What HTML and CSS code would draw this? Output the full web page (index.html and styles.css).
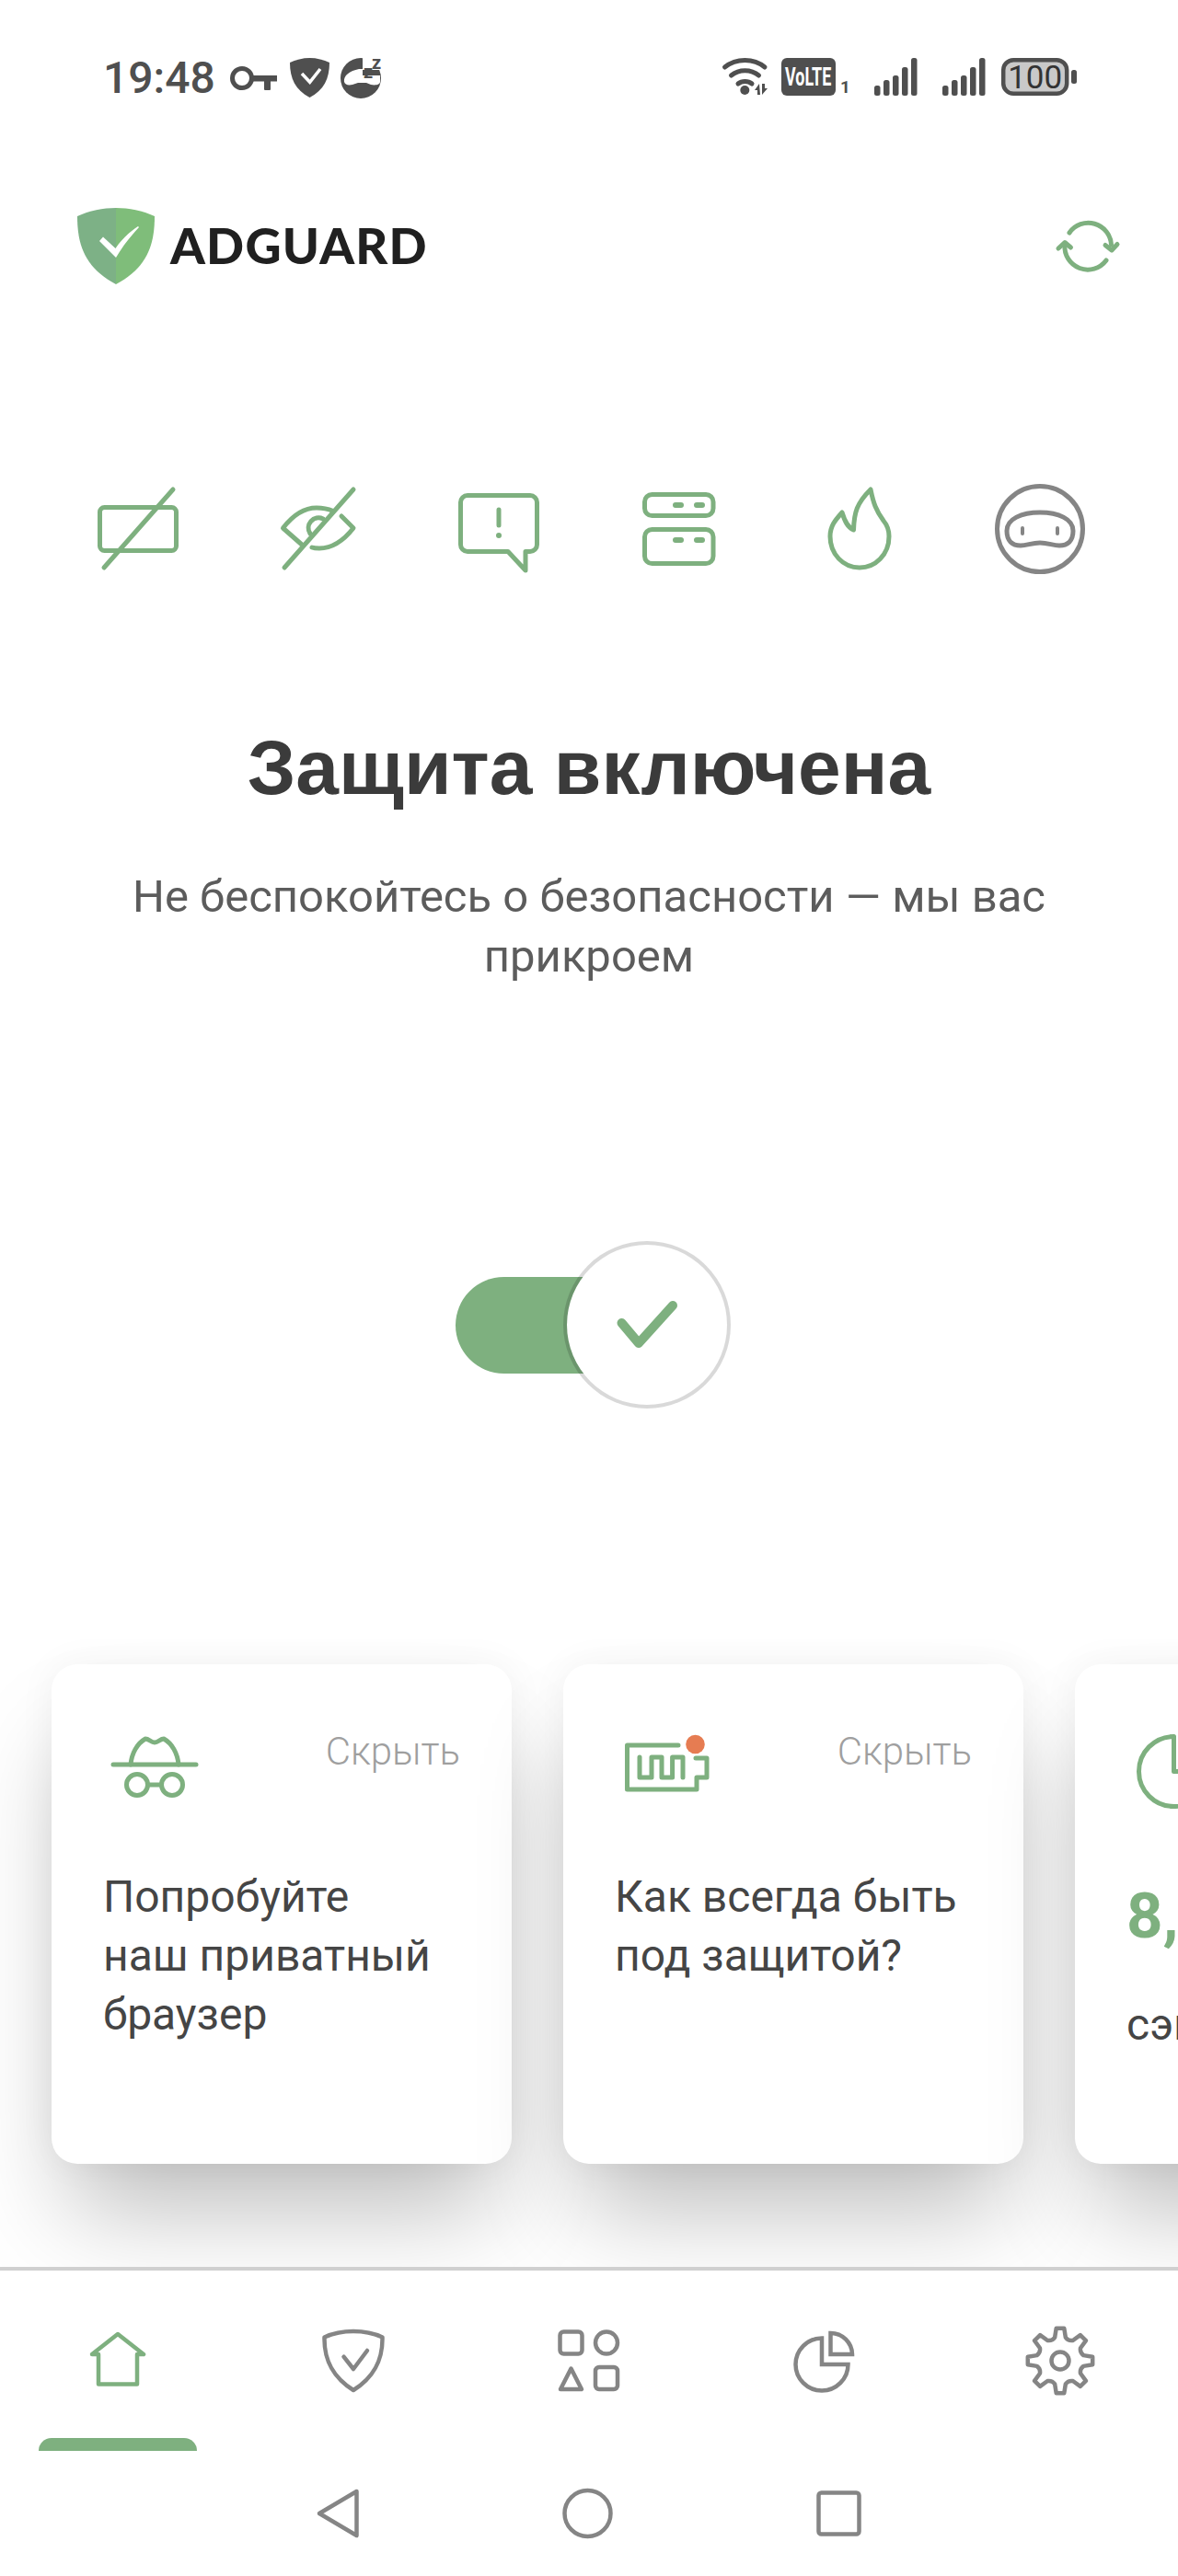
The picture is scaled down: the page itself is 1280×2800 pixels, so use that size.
FILE: index.html
```html
<!DOCTYPE html>
<html lang="ru">
<head>
  <meta charset="UTF-8">
  <title>AdGuard</title>
  <link rel="stylesheet" href="styles.css">
</head>
<body>

  <!-- Status bar -->
  <div class="status">
    <div class="status-group">
      <span class="time">19:48</span>
      <svg class="key" width="51" height="26" viewBox="0 0 51 26"><circle cx="13" cy="13" r="10.5" fill="none" stroke="#4f4f4f" stroke-width="5"/><rect x="23" y="10" width="28" height="6.5" fill="#4f4f4f"/><rect x="37" y="10" width="7" height="16" rx="1" fill="#4f4f4f"/></svg>
      <svg class="small-shield" width="43" height="43" viewBox="0 0 43 43"><path d="M21.5 0C29 0 37 2 43 5C43 22 37 35 21.5 43C6 35 0 22 0 5C6 2 14 0 21.5 0Z" fill="#4f4f4f"/><path d="M13 17L21.7 26.3L33 12" fill="none" stroke="#fff" stroke-width="3.5"/></svg>
      <svg class="sleep" width="45" height="45" viewBox="0 0 45 45"><circle cx="22" cy="23" r="22" fill="#4f4f4f"/><rect x="24" y="0" width="21" height="14" fill="#fff"/><path d="M4 27C3 20 10 15 20 13L24 13V20H43V27C43 30 38 31 33 30L28 28H19L13 30C8 31 5 30 4 27Z" fill="#fff"/><text x="25" y="23" class="zz">z</text><text x="34" y="13" class="zz">z</text></svg>
    </div>
    <div class="status-group status-right">
      <svg width="50" height="41" viewBox="0 0 50 41"><g fill="none" stroke="#4f4f4f" stroke-width="5" stroke-linecap="round"><path d="M2.5 10C15 0 34 0 46 10"/><path d="M9.5 19C18 12 31 12 39.5 19"/><path d="M17 28C21 24.500 28 24.500 32 28"/></g><circle cx="24.300" cy="35" r="5" fill="#4f4f4f"/><path d="M40 28L35 35H38V40H41ZM43 28V40L49 33H46V28Z" fill="#4f4f4f"/></svg>
      <div class="volte">
        <svg width="59" height="41" viewBox="0 0 59 41"><rect width="59" height="41" rx="6" fill="#4f4f4f"/><text transform="translate(4 30) scale(.64 1)" class="volte-text">VoLTE</text></svg>
        <span class="volte-num">1</span>
      </div>
      <svg class="signal" width="47" height="41" viewBox="0 0 47 41"><g fill="#4f4f4f"><rect x="0" y="30" width="6.500" height="11" rx="2.500"/><rect x="10" y="24" width="6.500" height="17" rx="2.500"/><rect x="20" y="19" width="6.500" height="22" rx="2.500"/><rect x="30" y="10" width="6.500" height="31" rx="2.500"/><rect x="40" y="0" width="6.500" height="41" rx="2.500"/></g></svg>
      <svg class="signal" width="47" height="41" viewBox="0 0 47 41"><g fill="#4f4f4f"><rect x="0" y="30" width="6.500" height="11" rx="2.500"/><rect x="10" y="24" width="6.500" height="17" rx="2.500"/><rect x="20" y="19" width="6.500" height="22" rx="2.500"/><rect x="30" y="10" width="6.500" height="31" rx="2.500"/><rect x="40" y="0" width="6.500" height="41" rx="2.500"/></g></svg>
      <svg class="battery" width="82" height="41" viewBox="0 0 82 41"><rect x="2.200" y="2.200" width="69" height="36.500" rx="11" fill="#c9c9c9" stroke="#4f4f4f" stroke-width="4.500"/><text x="36.700" y="33" class="battery-text">100</text><rect x="76" y="13" width="6" height="15" rx="2.500" fill="#4f4f4f"/></svg>
    </div>
  </div>

  <!-- Logo row -->
  <div class="appbar">
    <div class="logo">
      <svg width="84" height="83" viewBox="0 0 84 83"><path d="M42 0C28 0 13 3 0 9C0 40 8 65 42 83Z" fill="#7db186"/><path d="M42 0C56 0 71 3 84 9C84 40 76 65 42 83Z" fill="#7fbd7a"/><path d="M24 36L28 31.500L41.500 44C49 33 57 26 66 20L67 21C57 32 49 42 42 54Z" fill="#fff"/></svg>
      <span class="logo-text">ADGUARD</span>
    </div>
    <svg class="refresh" width="68" height="53" viewBox="0 0 68 53"><g fill="none" stroke="#7eb07f" stroke-width="5" stroke-linecap="round" stroke-linejoin="round"><path d="M14 12A25 25 0 0 1 59.500 25"/><path d="M9 25A25 25 0 0 0 54 42"/><path d="M53 25.500L60 31L66 24.500"/><path d="M2 29L9 22.500L15.500 28"/></g></svg>
  </div>

  <!-- Protection features -->
  <div class="features">
    <svg viewBox="0 0 120 100" class="feature green"><rect x="18.500" y="26.500" width="83" height="47" rx="5"/><path d="M23 92L98 7"/></svg>
    <svg viewBox="0 0 120 100" class="feature green"><path d="M42 67L21.500 49C33 34 46 27 58 27C64 27 70 28 76 30.500"/><path d="M85 36L98 49C87 63 74 71 61 71C58 71 55.500 71 53 70"/><path d="M65 39A11 11 0 0 0 51 55"/><path d="M23 92L98 7"/></svg>
    <svg viewBox="0 0 120 100" class="feature green"><path d="M26 13.500H94A7.500 7.500 0 0 1 101.500 21V67A7.500 7.500 0 0 1 94 74.500H89V95L70 74.500H26A7.500 7.500 0 0 1 18.500 67V21A7.500 7.500 0 0 1 26 13.500Z"/><path d="M60 29V46"/><path d="M60 57V57.100" stroke-width="6"/></svg>
    <svg viewBox="0 0 120 100" class="feature green"><rect x="22.500" y="12.500" width="74.500" height="23" rx="8"/><rect x="22.500" y="50.500" width="74.500" height="37" rx="8"/><path d="M56 24H62M79 24H85M56 62H62M79 62H85" stroke-width="6"/></svg>
    <svg viewBox="0 0 120 100" class="feature green"><path d="M72 7C75 22 78 30 86 41C91 47 92 52 92 58C92 78 77 92 60 92C42 92 28 77 28 58C28 47 33 41 41 32C44 42 47 48 53.500 51C54 32 57 22 72 7Z"/></svg>
    <svg viewBox="0 0 120 100" class="feature grey"><circle cx="60" cy="50" r="46.500"/><path d="M60 32C80 32 96 39 96 52C96 63 90 68 81 68C74 68 69 65 60 65C51 65 46 68 39 68C30 68 24 63 24 52C24 39 40 32 60 32Z"/><path d="M41 49V55M79 49V55" stroke-width="4"/></svg>
  </div>

  <h1 class="title">Защита включена</h1>
  <p class="subtitle">Не беспокойтесь о безопасности — мы вас прикроем</p>

  <!-- Main switch -->
  <div class="toggle">
    <div class="toggle-track"></div>
    <div class="toggle-knob">
      <svg width="84" height="64" viewBox="0 0 84 64"><path d="M14.500 30L33 52L70 11" fill="none" stroke="#7eb07f" stroke-width="10" stroke-linecap="round" stroke-linejoin="round"/></svg>
    </div>
  </div>

  <!-- Cards -->
  <div class="cards">
    <div class="card">
      <div class="card-head">
        <svg class="card-icon" viewBox="0 0 112 80"><path d="M11 38H101"/><path d="M30 38C31 26 37 15 46 10C50 10 52 14 56 14C60 14 62 10 66 10C75 15 81 26 82 38"/><circle cx="37" cy="60" r="11.500"/><circle cx="75" cy="60" r="11.500"/><path d="M48.500 60H63.500"/></svg>
        <span class="hide">Скрыть</span>
      </div>
      <div class="card-text">Попробуйте<br>наш приватный<br>браузер</div>
    </div>
    <div class="card">
      <div class="card-head">
        <svg class="card-icon" viewBox="0 0 112 80"><path d="M69 17H13.500V65H89V52H100V31H88"/><path d="M27 30V52H40V30H51V52H62.600V30H74V52"/><circle cx="87.500" cy="16" r="10.300" class="dot"/></svg>
        <span class="hide">Скрыть</span>
      </div>
      <div class="card-text">Как всегда быть<br>под защитой?</div>
    </div>
    <div class="card">
      <div class="card-head">
        <svg class="card-icon" viewBox="0 0 112 80"><path d="M51.500 7.500V45.500H89.500A38 38 0 1 1 51.500 7.500Z"/></svg>
        <span class="hide">Скрыть</span>
      </div>
      <div class="card-value">8,5 ГБ</div>
      <div class="card-label">сэкономлено</div>
    </div>
  </div>

  <!-- Bottom tabs -->
  <div class="tabs">
    <div class="tab">
      <svg viewBox="0 0 80 80" class="tab-icon green"><path d="M19 33H12L40 11L68 33H61V65.500H19Z"/></svg>
      <div class="tab-marker"></div>
    </div>
    <div class="tab">
      <svg viewBox="0 0 80 80" class="tab-icon grey"><path d="M8.500 14.500C18 10 29 8 40 8C51 8 62 10 71.500 14.500C72 40 62 58 40 72C18 58 8 40 8.500 14.500Z"/><path d="M29.500 35.700L40 49L55 29"/></svg>
    </div>
    <div class="tab">
      <svg viewBox="0 0 80 80" class="tab-icon grey"><rect x="8.500" y="8.500" width="24" height="24" rx="4"/><circle cx="59" cy="20.500" r="12"/><path d="M20.500 48.500L32 71H9Z"/><rect x="47" y="47" width="24" height="24" rx="4"/></svg>
    </div>
    <div class="tab">
      <svg viewBox="0 0 80 80" class="tab-icon grey miter"><path d="M37 15.500V44H65.500A28.500 28.500 0 1 1 37 15.500Z"/><path d="M46.500 10V33H70A23.500 23.500 0 0 0 46.500 10Z"/></svg>
    </div>
    <div class="tab">
      <svg viewBox="0 0 80 80" class="tab-icon grey"><path d="M34.150 14.700L35.700 4.800H44.300L45.850 14.700Q48.800 18.750 53.750 17.970L61.850 12.070L67.930 18.150L62.030 26.250Q61.250 31.200 65.300 34.150L75.200 35.700V44.300L65.300 45.850Q61.250 48.800 62.030 53.750L67.930 61.850L61.850 67.930L53.750 62.030Q48.800 61.250 45.850 65.300L44.300 75.200H35.700L34.150 65.300Q31.200 61.250 26.250 62.030L18.150 67.930L12.070 61.850L17.970 53.750Q18.750 48.800 14.700 45.850L4.800 44.300V35.700L14.700 34.150Q18.750 31.200 17.970 26.250L12.070 18.150L18.150 12.070L26.250 17.970Q31.200 18.750 34.150 14.700Z"/><circle cx="40" cy="40" r="9.500"/></svg>
    </div>
  </div>

  <!-- Android navigation -->
  <div class="sysnav">
    <svg width="46" height="54" viewBox="0 0 46 54" class="grey-line"><path d="M43.500 3L3 27L43.500 51Z"/></svg>
    <svg width="55" height="54" viewBox="0 0 55 54" class="grey-line"><circle cx="27.500" cy="27" r="25"/></svg>
    <svg width="49" height="50" viewBox="0 0 49 50" class="grey-line"><rect x="2.500" y="2.500" width="44" height="45" rx="3"/></svg>
  </div>

</body>
</html>
```

FILE: styles.css
```css
body {
  margin: 0;
  width: 1280px;
  height: 2800px;
  overflow: hidden;
  background: white;
  font-family: Roboto, sans-serif;
}

svg {
  overflow: visible;
}

/* Status bar */
.status {
  display: flex;
  justify-content: space-between;
  height: 45px;
  margin-top: 62px;
  padding: 0 110px 0 112px;
}

.status-group {
  display: flex;
  align-items: center;
  gap: 14px;
}

.time {
  margin-right: 2px;
  font-size: 48px;
  font-weight: 500;
  line-height: 45px;
  color: #4f4f4f;
}

.sleep {
  margin-left: -2px;
}

.status-right {
  align-items: flex-start;
  padding-top: 1px;
}

.volte {
  display: flex;
  align-items: flex-end;
  gap: 5px;
  width: 72px;
  height: 41px;
}

.volte-num {
  font-size: 19px;
  font-weight: 700;
  line-height: 19px;
  color: #4f4f4f;
}

.signal {
  margin-left: 15px;
}

.signal + .signal {
  margin-left: 13px;
}

.battery {
  margin-left: 3px;
}

.zz {
  font: 700 20px Roboto, sans-serif;
  fill: #4f4f4f;
}

.volte-text {
  font: 700 28px Roboto, sans-serif;
  fill: white;
}

.battery-text {
  font: 400 35px Roboto, sans-serif;
  fill: #333;
  text-anchor: middle;
}

/* Logo row */
.appbar {
  display: flex;
  justify-content: space-between;
  align-items: center;
  height: 84px;
  margin-top: 118px;
  padding: 0 64px 0 84px;
}

.logo {
  display: flex;
  align-items: center;
  gap: 17px;
}

.logo-text {
  margin-top: -2px;
  font-family: Lato, sans-serif;
  font-size: 54px;
  font-weight: 900;
  letter-spacing: 1.2px;
  color: #202020;
}

/* Feature icons */
.features {
  display: grid;
  grid-template-columns: repeat(6, 196px);
  justify-content: center;
  justify-items: center;
  margin-top: 216px;
}

.feature {
  width: 120px;
  height: 100px;
  fill: none;
  stroke-width: 5;
  stroke-linecap: round;
  stroke-linejoin: round;
}

.feature.green {
  stroke: #7eb07f;
}

.feature.grey {
  stroke: #858585;
}

.title {
  margin: 159px 0 0;
  font-family: "Liberation Sans", sans-serif;
  font-size: 84px;
  font-weight: 700;
  line-height: 100px;
  text-align: center;
  color: #3b3b3b;
}

.subtitle {
  width: 1060px;
  margin: 58px auto 0;
  font-size: 49px;
  line-height: 65px;
  text-align: center;
  color: #5c5c5c;
}

/* Switch */
.toggle {
  display: flex;
  justify-content: center;
  align-items: center;
  margin-top: 277px;
  padding-left: 9px;
}

.toggle-track {
  width: 160px;
  height: 105px;
  border-radius: 53px 0 0 53px;
  background: #7eb07f;
}

.toggle-knob {
  display: flex;
  justify-content: center;
  align-items: center;
  width: 174px;
  height: 174px;
  margin-left: -43px;
  border: 4px solid rgba(0,0,0,0.15);
  border-radius: 50%;
  background: white;
  background-clip: padding-box;
}

/* Cards */
.cards {
  display: flex;
  gap: 56px;
  height: 655px;
  padding: 278px 0 0 56px;
  overflow: hidden;
}

.card {
  flex-shrink: 0;
  box-sizing: border-box;
  width: 500px;
  height: 543px;
  padding: 71px 56px 0;
  border-radius: 28px;
  background: white;
  box-shadow: 0 70px 110px -20px rgba(0,0,0,0.26), 0 0 40px rgba(0,0,0,0.05);
}

.card-head {
  display: flex;
  justify-content: space-between;
  height: 80px;
}

.card-icon {
  width: 112px;
  height: 80px;
  fill: none;
  stroke: #7eb07f;
  stroke-width: 5;
  stroke-linecap: round;
  stroke-linejoin: round;
}

.card-icon .dot {
  fill: #e67c52;
  stroke: none;
}

.hide {
  font-size: 42px;
  font-weight: 300;
  line-height: 48px;
  color: #9f9f9f;
}

.card-text {
  margin-top: 70px;
  font-size: 48px;
  line-height: 64px;
  color: #454545;
}

.card-value {
  margin-top: 83px;
  font-size: 69px;
  font-weight: 700;
  line-height: 80px;
  color: #7eb07f;
}

.card-label {
  margin-top: 46px;
  font-size: 48px;
  line-height: 64px;
  color: #454545;
}

/* Bottom tabs */
.tabs {
  display: grid;
  grid-template-columns: repeat(5, 256px);
  height: 196px;
  border-top: 4px solid #d0d0d0;
}

.tab {
  display: flex;
  flex-direction: column;
  align-items: center;
  padding-top: 58px;
}

.tab-icon {
  width: 80px;
  height: 80px;
  fill: none;
  stroke-width: 4.5;
  stroke-linecap: round;
  stroke-linejoin: round;
}

.tab-icon.green {
  stroke: #7eb07f;
}

.tab-icon.grey {
  stroke: #858585;
}

.tab-icon.miter {
  stroke-linejoin: miter;
}

.tab-marker {
  width: 172px;
  height: 14px;
  margin-top: 44px;
  border-radius: 14px 14px 0 0;
  background: #7eb07f;
}

/* Android navigation */
.sysnav {
  display: flex;
  justify-content: center;
  align-items: center;
  gap: 221px;
  height: 136px;
}

.grey-line {
  fill: none;
  stroke: #858585;
  stroke-width: 4.5;
  stroke-linejoin: round;
}
```
